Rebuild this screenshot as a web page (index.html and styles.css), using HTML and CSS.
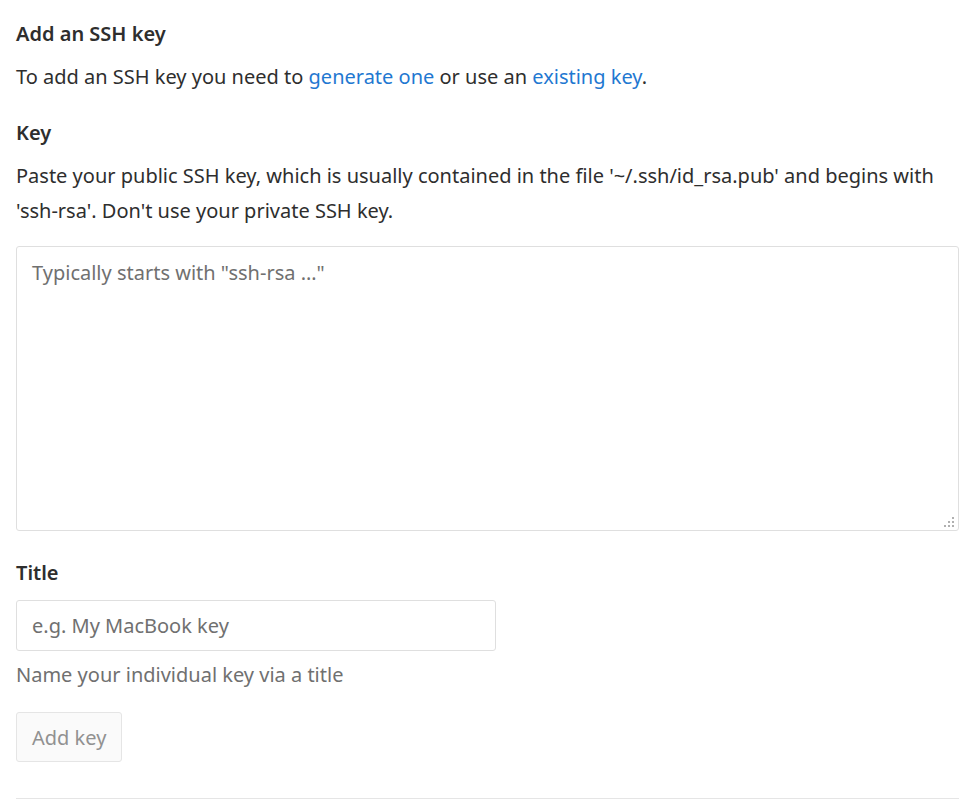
FILE: index.html
```html
<!DOCTYPE html>
<html>
<head>
<meta charset="utf-8">
<link rel="stylesheet" href="styles.css">
</head>
<body>
<div class="page">
  <h4 class="heading">Add an SSH key</h4>
  <p class="intro">To add an SSH key you need to <a href="#">generate one</a> or use an <a href="#">existing key</a>.</p>
  <form class="form">
    <label class="label" for="key">Key</label>
    <p class="desc">Paste your public SSH key, which is usually contained in the file '~/.ssh/id_rsa.pub' and begins with 'ssh-rsa'. Don't use your private SSH key.</p>
    <div class="textarea-wrap">
      <textarea id="key" class="textarea" placeholder="Typically starts with &quot;ssh-rsa …&quot;"></textarea>
      <span class="grip" aria-hidden="true">
        <svg width="10" height="10" viewBox="0 0 10 10">
          <rect x="8" y="0" width="2" height="2"/>
          <rect x="4" y="4" width="2" height="2"/>
          <rect x="8" y="4" width="2" height="2"/>
          <rect x="0" y="8" width="2" height="2"/>
          <rect x="4" y="8" width="2" height="2"/>
          <rect x="8" y="8" width="2" height="2"/>
        </svg>
      </span>
    </div>
    <label class="label title-label" for="title">Title</label>
    <input id="title" class="input" type="text" placeholder="e.g. My MacBook key">
    <p class="help">Name your individual key via a title</p>
    <button type="button" class="btn" disabled>Add key</button>
  </form>
  <hr class="rule">
</div>
</body>
</html>
```
FILE: styles.css
```css
html, body {
  margin: 0;
  padding: 0;
  background: #fff;
}
body {
  font-family: "Noto Sans", "Open Sans", sans-serif;
  font-size: 20px;
  color: #2e2e2e;
}
.page {
  padding: 20px 10px 0 16px;
}
.heading {
  margin: 0;
  font-size: 20px;
  font-weight: 600;
  line-height: 28px;
}
.intro {
  margin: 11px 0 0;
  line-height: 35px;
}
.intro a {
  color: #1f78d1;
  text-decoration: none;
}
.form {
  display: flex;
  flex-direction: column;
  align-items: flex-start;
}
.label {
  margin-top: 25px;
  font-size: 20px;
  font-weight: 600;
  line-height: 28px;
}
.desc {
  margin: 11px 0 0;
  line-height: 35px;
}
.textarea-wrap {
  position: relative;
  margin-top: 18px;
  width: 943px;
  height: 285px;
}
.textarea {
  box-sizing: border-box;
  display: block;
  width: 100%;
  height: 100%;
  margin: 0;
  padding: 12px 15px;
  border: 1px solid #dfdfdf;
  border-radius: 3px;
  font-family: inherit;
  font-size: 20px;
  line-height: 28px;
  color: #2e2e2e;
  resize: none;
}
.grip {
  position: absolute;
  right: 5px;
  bottom: 4px;
  width: 10px;
  height: 10px;
  fill: #b0b0b0;
  pointer-events: none;
}
.grip svg {
  display: block;
}
.textarea::placeholder, .input::placeholder {
  color: #707070;
}
.title-label {
  margin-top: 28px;
}
.input {
  box-sizing: border-box;
  margin-top: 13px;
  width: 480px;
  height: 51px;
  padding: 0 15px;
  border: 1px solid #dfdfdf;
  border-radius: 3px;
  font-family: inherit;
  font-size: 20px;
  color: #2e2e2e;
}
.help {
  margin: 6px 0 0;
  line-height: 35px;
  color: #707070;
}
.btn {
  box-sizing: border-box;
  margin-top: 20px;
  height: 50px;
  padding: 0 15px;
  border: 1px solid #e5e5e5;
  border-radius: 3px;
  background: #fafafa;
  color: #919191;
  font-family: inherit;
  font-size: 20px;
}
.rule {
  margin: 36px 0 0;
  width: 943px;
  border: 0;
  border-top: 1px solid #e5e5e5;
}
```
